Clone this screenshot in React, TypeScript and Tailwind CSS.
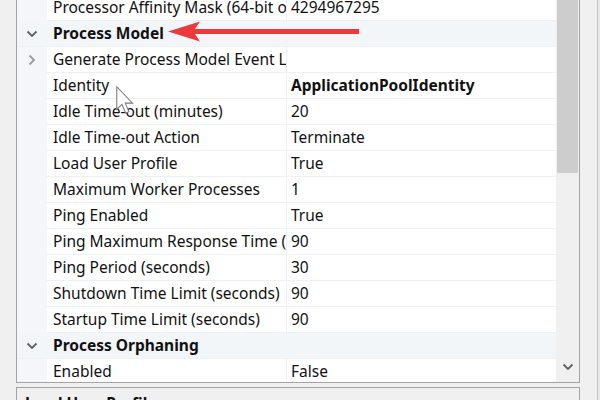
import React from "react";

type Row =
  | { kind: "cat"; name: string }
  | { kind: "prop"; name: string; value?: string; bold?: boolean; expand?: boolean };

const rows: Row[] = [
  { kind: "prop", name: "Processor Affinity Mask (64-bit option)", value: "4294967295" },
  { kind: "cat", name: "Process Model" },
  { kind: "prop", name: "Generate Process Model Event Log Entry", value: "", expand: true },
  { kind: "prop", name: "Identity", value: "ApplicationPoolIdentity", bold: true },
  { kind: "prop", name: "Idle Time-out (minutes)", value: "20" },
  { kind: "prop", name: "Idle Time-out Action", value: "Terminate" },
  { kind: "prop", name: "Load User Profile", value: "True" },
  { kind: "prop", name: "Maximum Worker Processes", value: "1" },
  { kind: "prop", name: "Ping Enabled", value: "True" },
  { kind: "prop", name: "Ping Maximum Response Time (seconds)", value: "90" },
  { kind: "prop", name: "Ping Period (seconds)", value: "30" },
  { kind: "prop", name: "Shutdown Time Limit (seconds)", value: "90" },
  { kind: "prop", name: "Startup Time Limit (seconds)", value: "90" },
  { kind: "cat", name: "Process Orphaning" },
  { kind: "prop", name: "Enabled", value: "False" },
];

function ChevronDown({ color = "#5f5f5f" }: { color?: string }) {
  return (
    <svg width="12" height="8" viewBox="0 0 12 8">
      <path d="M1.5 1.5 L6 6 L10.5 1.5" fill="none" stroke={color} strokeWidth="1.8" />
    </svg>
  );
}

function ChevronRight() {
  return (
    <svg width="8" height="12" viewBox="0 0 8 12">
      <path d="M1.5 1.5 L6 6 L1.5 10.5" fill="none" stroke="#9a9a9a" strokeWidth="1.8" />
    </svg>
  );
}

export default function App() {
  return (
    <div
      className="relative w-[600px] h-[400px] overflow-hidden bg-[#f0f0f0] text-[15.5px] text-[#111]"
      style={{ fontFamily: '"Noto Sans", "Open Sans", sans-serif' }}
    >
      <div className="flex h-full">
        <div className="w-[16px] shrink-0" />
        <div className="flex flex-col w-[564px] shrink-0">
          {/* main property grid panel */}
          <div className="mt-[-6px] h-[389px] shrink-0 border border-[#a3a3a3] bg-white flex overflow-hidden">
            <div className="flex-1 flex flex-col bg-[#f4f6f9]">
              {rows.map((r, i) =>
                r.kind === "cat" ? (
                  <div
                    key={i}
                    className="h-[26px] shrink-0 flex items-center border-b border-[#eef1f5] bg-[#f3f6f9]"
                  >
                    <div className="w-[30px] flex justify-center items-center">
                      <ChevronDown />
                    </div>
                    <div className="pl-[6px] font-bold">{r.name}</div>
                  </div>
                ) : (
                  <div key={i} className="h-[26px] shrink-0 flex">
                    <div className="w-[30px] shrink-0 flex justify-center items-center">
                      {r.expand ? <ChevronRight /> : null}
                    </div>
                    <div className="w-[239px] shrink-0 bg-white border-b border-[#eef0f3] flex items-center pl-[6px] overflow-hidden whitespace-nowrap">
                      {r.name}
                    </div>
                    <div className="w-px shrink-0 bg-[#eef1f5]" />
                    <div
                      className={
                        "flex-1 bg-white border-b border-[#eef0f3] flex items-center pl-[4px] whitespace-nowrap " +
                        (r.bold ? "font-bold" : "")
                      }
                    >
                      {r.value}
                    </div>
                  </div>
                )
              )}
            </div>
            {/* scrollbar */}
            <div className="w-[23px] shrink-0 bg-[#f0f0f0] flex flex-col px-[1px]">
              <div className="h-[178px] bg-[#cdcdcd]" />
              <div className="flex-1" />
              <div className="h-[22px] flex justify-center items-start pt-[3px]">
                <ChevronDown color="#606060" />
              </div>
            </div>
          </div>
          <div className="h-[4px] shrink-0" />
          {/* description panel */}
          <div className="flex-1 border border-[#a3a3a3] bg-[#f0f0f0] pl-[8px] pt-[4px]">
            <div className="font-bold">Load User Profile</div>
          </div>
        </div>
        <div className="w-[17px] shrink-0" />
        <div className="w-px shrink-0 bg-[#c4c4c4]" />
        <div className="flex-1 bg-[#e8e8e8]" />
      </div>

      {/* red annotation arrow */}
      <svg className="absolute left-[166px] top-[20px]" width="196" height="24" viewBox="0 0 196 24">
        <path d="M2 11.5 L34 1.5 L29 9 L193 9 L193 14 L29 14 L34 21.5 Z" fill="#ea3a3d" />
      </svg>

      {/* mouse cursor */}
      <svg className="absolute left-[116px] top-[86px]" width="18" height="30" viewBox="0 0 12 20">
        <path
          d="M0.5 0.5 L0.5 15.5 L4 12.2 L6.4 18 L8.6 17.1 L6.2 11.4 L11 11.4 Z"
          fill="#ffffff"
          stroke="#7a7a7a"
          strokeWidth="0.7"
          strokeLinejoin="miter"
        />
      </svg>
    </div>
  );
}
